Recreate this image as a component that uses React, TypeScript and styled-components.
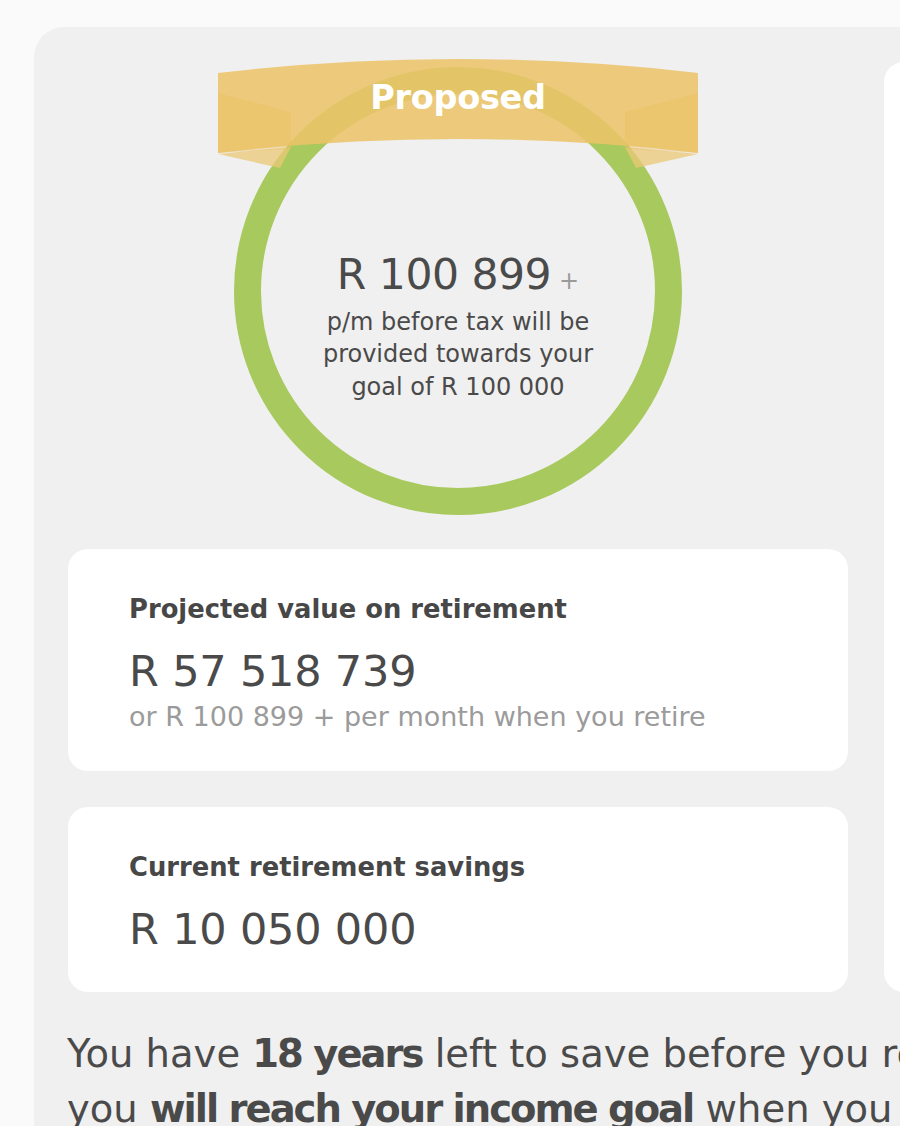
import React from "react";
import styled, { createGlobalStyle } from "styled-components";

const GlobalStyle = createGlobalStyle`
  html, body {
    margin: 0;
    padding: 0;
    background: #fafafa;
    overflow: hidden;
  }
  body {
    font-family: "DejaVu Sans", "Liberation Sans", sans-serif;
    color: #4a4a4a;
  }
`

const Panel = styled.div`
  margin: 27px 0 0 34px;
  padding: 35px 0 60px 34px;
  width: 1700px;
  min-height: 1200px;
  background: #f0f0f0;
  border-radius: 30px 0 0 0;
`
const Columns = styled.div`
  display: grid;
  grid-template-columns: 780px 780px;
  gap: 36px;
  align-items: stretch;
`
const LeftColumn = styled.div`
  display: flex;
  flex-direction: column;
`
const SidePanel = styled.div`
  background: #fff;
  border-radius: 20px;
`
const GoalArea = styled.div`
  position: relative;
  display: flex;
  justify-content: center;
  padding-top: 5px;
  margin-bottom: 34px;
`
const Ring = styled.div`
  box-sizing: border-box;
  width: 448px;
  height: 448px;
  border: 27px solid #a7c95d;
  border-radius: 50%;
  display: flex;
  flex-direction: column;
  align-items: center;
  justify-content: center;
  padding-top: 71px;
  text-align: center;
`
const RingAmount = styled.div`
  font-size: 42.5px;
  line-height: 50px;
  color: #4a4a4a;
  letter-spacing: -0.5px;
`
const Plus = styled.span`
  font-size: 24px;
  color: #9a9a9a;
  margin-left: 8px;
  letter-spacing: 0;
`
const RingText = styled.div`
  font-size: 24px;
  line-height: 32.5px;
  color: #4a4a4a;
`
const Ribbon = styled.div`
  position: absolute;
  top: -3px;
  left: 50%;
  transform: translateX(-50%);
  width: 480px;
  height: 112px;
  display: grid;
  > * {
    grid-area: 1 / 1;
  }
`
const RibbonLabel = styled.span`
  justify-self: center;
  margin-top: 19px;
  font-weight: 700;
  font-size: 33.5px;
  line-height: 40px;
  color: #fff;
  letter-spacing: -0.3px;
`
const Card = styled.div<{ $gap?: boolean }>`
  background: #fff;
  border-radius: 20px;
  padding: 44px 60px 38px 61px;
  margin-bottom: ${p => (p.$gap ? "36px" : "0")};
`
const CardTitle = styled.div`
  font-weight: 700;
  font-size: 25.8px;
  line-height: 33px;
  color: #474747;
  margin-bottom: 20px;
`
const CardValue = styled.div`
  font-size: 43px;
  line-height: 50px;
  color: #4a4a4a;
  letter-spacing: -0.2px;
`
const CardNote = styled.div`
  margin-top: 5px;
  font-size: 27px;
  line-height: 32px;
  color: #9b9b9b;
`
const Summary = styled.p`
  margin: 34px 0 0 -1px;
  font-size: 38.5px;
  line-height: 55px;
  color: #4a4a4a;
  white-space: nowrap;
  b {
    font-weight: 700;
    letter-spacing: -2px;
  }
`

function RibbonShape() {
  return (
    <svg width="480" height="112" viewBox="0 0 480 112">
      <polygon points="0,95 62,109 73,88" fill="rgba(236,200,120,0.75)" />
      <polygon points="480,95 418,109 407,88" fill="rgba(236,200,120,0.75)" />
      <path d="M0,14 Q240,-14 480,14 L480,94 Q240,66 0,94 Z" fill="rgba(236,196,106,0.88)" />
      <polygon points="0,34 73,53 73,90 0,94" fill="rgba(236,190,90,0.35)" />
      <polygon points="480,34 407,53 407,90 480,94" fill="rgba(236,190,90,0.35)" />
    </svg>
  )
}

export default function App() {
  return (
    <>
      <GlobalStyle />
      <Panel>
        <Columns>
          <LeftColumn>
            <GoalArea>
              <Ring>
                <RingAmount>
                  R 100 899<Plus>+</Plus>
                </RingAmount>
                <RingText>
                  p/m before tax will be
                  <br />
                  provided towards your
                  <br />
                  goal of R 100 000
                </RingText>
              </Ring>
              <Ribbon>
                <RibbonShape />
                <RibbonLabel>Proposed</RibbonLabel>
              </Ribbon>
            </GoalArea>
            <Card $gap>
              <CardTitle>Projected value on retirement</CardTitle>
              <CardValue>R 57 518 739</CardValue>
              <CardNote>or R 100 899 + per month when you retire</CardNote>
            </Card>
            <Card>
              <CardTitle>Current retirement savings</CardTitle>
              <CardValue>R 10 050 000</CardValue>
            </Card>
          </LeftColumn>
          <SidePanel />
        </Columns>
        <Summary>
          You have <b>18 years</b> left to save before you retire, and
          <br />
          you <b>will reach your income goal</b> when you retire.
        </Summary>
      </Panel>
    </>
  )
}
